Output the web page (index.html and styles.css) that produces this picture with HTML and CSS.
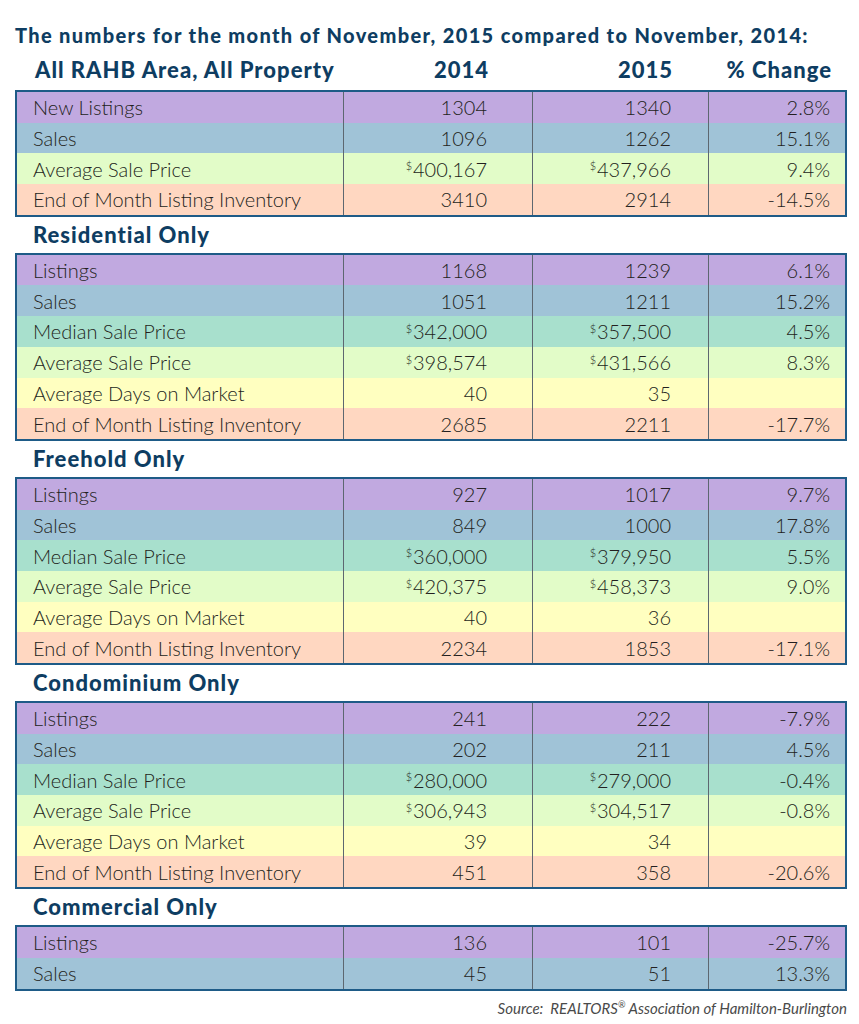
FILE: index.html
```html
<!DOCTYPE html>
<html lang="en">
<head>
  <meta charset="UTF-8" />
  <meta name="viewport" content="width=device-width, initial-scale=1.0"/>
  <title>RAHB November 2015 Market Numbers</title>
  <link rel="stylesheet" href="styles.css">
</head>
<body>

  <div class="page">
    <h1 class="title">The numbers for the month of November, 2015 compared to November, 2014:</h1>

    <!-- column headings -->
    <div class="head-row">
      <div class="h-label">All RAHB Area, All Property</div>
      <div class="h-num c2">2014</div>
      <div class="h-num c3">2015</div>
      <div class="h-num c4">% Change</div>
    </div>

    <!-- All property -->
    <div class="stats">
      <div class="row purple"><div class="c1">New Listings</div><div class="c2">1304</div><div class="c3">1340</div><div class="c4">2.8%</div></div>
      <div class="row blue"><div class="c1">Sales</div><div class="c2">1096</div><div class="c3">1262</div><div class="c4">15.1%</div></div>
      <div class="row green"><div class="c1">Average Sale Price</div><div class="c2"><sup>$</sup>400,167</div><div class="c3"><sup>$</sup>437,966</div><div class="c4">9.4%</div></div>
      <div class="row peach"><div class="c1">End of Month Listing Inventory</div><div class="c2">3410</div><div class="c3">2914</div><div class="c4">-14.5%</div></div>
    </div>

    <h2 class="section">Residential Only</h2>
    <div class="stats">
      <div class="row purple"><div class="c1">Listings</div><div class="c2">1168</div><div class="c3">1239</div><div class="c4">6.1%</div></div>
      <div class="row blue"><div class="c1">Sales</div><div class="c2">1051</div><div class="c3">1211</div><div class="c4">15.2%</div></div>
      <div class="row mint"><div class="c1">Median Sale Price</div><div class="c2"><sup>$</sup>342,000</div><div class="c3"><sup>$</sup>357,500</div><div class="c4">4.5%</div></div>
      <div class="row green"><div class="c1">Average Sale Price</div><div class="c2"><sup>$</sup>398,574</div><div class="c3"><sup>$</sup>431,566</div><div class="c4">8.3%</div></div>
      <div class="row yellow"><div class="c1">Average Days on Market</div><div class="c2">40</div><div class="c3">35</div><div class="c4"></div></div>
      <div class="row peach"><div class="c1">End of Month Listing Inventory</div><div class="c2">2685</div><div class="c3">2211</div><div class="c4">-17.7%</div></div>
    </div>

    <h2 class="section">Freehold Only</h2>
    <div class="stats">
      <div class="row purple"><div class="c1">Listings</div><div class="c2">927</div><div class="c3">1017</div><div class="c4">9.7%</div></div>
      <div class="row blue"><div class="c1">Sales</div><div class="c2">849</div><div class="c3">1000</div><div class="c4">17.8%</div></div>
      <div class="row mint"><div class="c1">Median Sale Price</div><div class="c2"><sup>$</sup>360,000</div><div class="c3"><sup>$</sup>379,950</div><div class="c4">5.5%</div></div>
      <div class="row green"><div class="c1">Average Sale Price</div><div class="c2"><sup>$</sup>420,375</div><div class="c3"><sup>$</sup>458,373</div><div class="c4">9.0%</div></div>
      <div class="row yellow"><div class="c1">Average Days on Market</div><div class="c2">40</div><div class="c3">36</div><div class="c4"></div></div>
      <div class="row peach"><div class="c1">End of Month Listing Inventory</div><div class="c2">2234</div><div class="c3">1853</div><div class="c4">-17.1%</div></div>
    </div>

    <h2 class="section">Condominium Only</h2>
    <div class="stats">
      <div class="row purple"><div class="c1">Listings</div><div class="c2">241</div><div class="c3">222</div><div class="c4">-7.9%</div></div>
      <div class="row blue"><div class="c1">Sales</div><div class="c2">202</div><div class="c3">211</div><div class="c4">4.5%</div></div>
      <div class="row mint"><div class="c1">Median Sale Price</div><div class="c2"><sup>$</sup>280,000</div><div class="c3"><sup>$</sup>279,000</div><div class="c4">-0.4%</div></div>
      <div class="row green"><div class="c1">Average Sale Price</div><div class="c2"><sup>$</sup>306,943</div><div class="c3"><sup>$</sup>304,517</div><div class="c4">-0.8%</div></div>
      <div class="row yellow"><div class="c1">Average Days on Market</div><div class="c2">39</div><div class="c3">34</div><div class="c4"></div></div>
      <div class="row peach"><div class="c1">End of Month Listing Inventory</div><div class="c2">451</div><div class="c3">358</div><div class="c4">-20.6%</div></div>
    </div>

    <h2 class="section">Commercial Only</h2>
    <div class="stats">
      <div class="row purple"><div class="c1">Listings</div><div class="c2">136</div><div class="c3">101</div><div class="c4">-25.7%</div></div>
      <div class="row blue"><div class="c1">Sales</div><div class="c2">45</div><div class="c3">51</div><div class="c4">13.3%</div></div>
    </div>

    <p class="source">Source:&nbsp; REALTORS<sup>®</sup> Association of Hamilton-Burlington</p>
  </div>

</body>
</html>
```

FILE: styles.css
```css
body { margin: 0; background: #fff; font-family: "Lato", "DejaVu Sans", sans-serif; color: #231f20; }
.page { width: 832px; padding: 0 0 0 15px; }

.title { margin: 0; padding-top: 23px; height: 32px; font-size: 20px; font-weight: 900; color: #0e3d62; white-space: nowrap; letter-spacing: 1.35px; }

.head-row { display: grid; grid-template-columns: 328px 189px 176px 137px; height: 35px; align-items: end; padding-left: 2px; font-size: 22px; font-weight: 900; color: #0e3d62; line-height: 1; padding-bottom: 9px; box-sizing: border-box; letter-spacing: 1px; }
.head-row .h-label { padding-left: 18px; }
.h-num { text-align: right; }

.stats { border: 2px solid #1e5b87; }
.row { display: grid; grid-template-columns: 326px 189px 176px 137px; height: 30.7px; align-items: stretch; font-size: 20px; font-weight: 300; }
.row > div { display: flex; align-items: center; }
.c1 { padding-left: 16px; }
.row .c2, .row .c3, .row .c4 { justify-content: flex-end; border-left: 1px solid #5d6770; }
.c2 { padding-right: 45px; }
.c3 { padding-right: 37px; }
.c4 { padding-right: 15px; }
.row sup { font-size: 11px; align-self: flex-start; margin-top: 6px; margin-right: 1px; }

.purple { background: #c1a9e0; }
.blue { background: #a0c3d7; }
.mint { background: #a8e0cd; }
.green { background: #e2fcc8; }
.yellow { background: #ffffc0; }
.peach { background: #ffd7c1; }

.section { margin: 0; height: 36px; box-sizing: border-box; padding: 7px 0 0 18px; font-size: 22px; font-weight: 900; color: #0e3d62; line-height: 1; letter-spacing: 1px; }

.source { margin: 8px 0 0; text-align: right; font-size: 15px; font-style: italic; color: #4a4a4a; }
.source sup { font-size: 9px; }
```
